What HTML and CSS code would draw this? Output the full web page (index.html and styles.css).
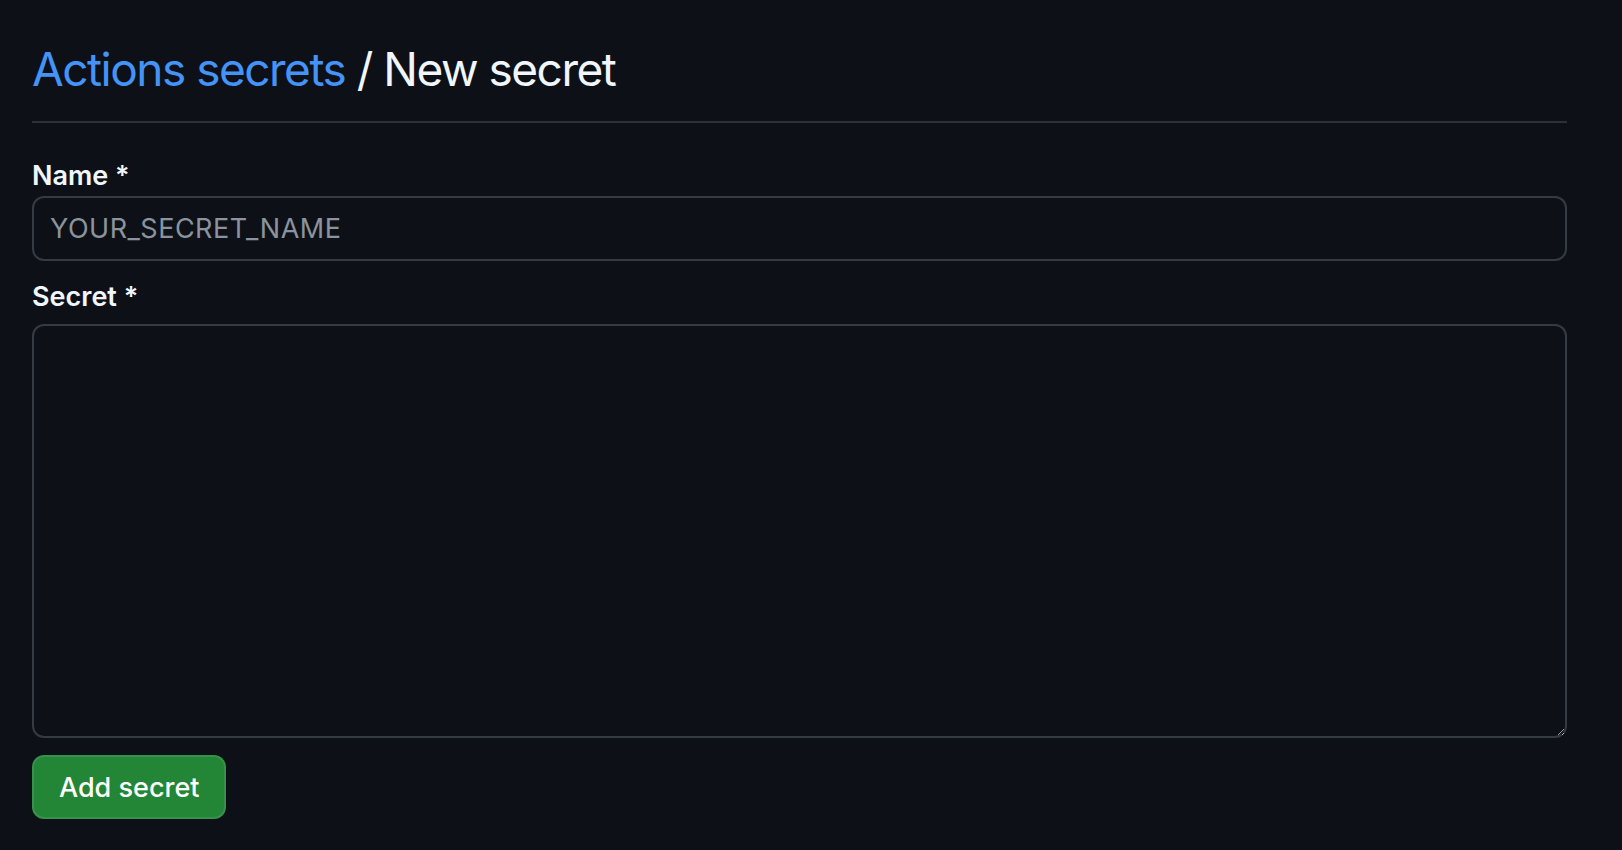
FILE: index.html
```html
<!DOCTYPE html>
<html lang="en">
<head>
    <meta charset="UTF-8">
    <title>New secret</title>
    <link rel="stylesheet" href="styles.css">
</head>
<body>
    <div class="container">
        <div class="subhead">
            <h2 class="subhead-heading"><a href="#">Actions secrets</a> / New secret</h2>
        </div>

        <form class="secret-form" onsubmit="return false">
            <label class="form-label" for="secret-name">Name *</label>
            <input type="text" id="secret-name" class="form-control" placeholder="YOUR_SECRET_NAME">

            <label class="form-label label-secret" for="secret-value">Secret *</label>
            <textarea id="secret-value" class="form-control secret-value"></textarea>

            <button type="submit" class="btn-primary">Add secret</button>
        </form>
    </div>
</body>
</html>
```

FILE: styles.css
```css
html {
    color-scheme: dark;
}
body {
    font-family: 'Inter', 'Liberation Sans', sans-serif;
    margin: 0;
    padding: 0;
    background: #0d1117;
    color: #f0f6fc;
}
.container {
    width: 1535px;
    padding: 35px 0 0 32px;
}
.subhead {
    padding-bottom: 17px;
    border-bottom: 2px solid #2c3139;
}
.subhead-heading {
    margin: 0;
    font-size: 46px;
    font-weight: 400;
    line-height: 69px;
    letter-spacing: -1.5px;
    color: #f0f6fc;
}
.subhead-heading a {
    color: #4493f8;
    text-decoration: none;
}
.secret-form {
    display: flex;
    flex-direction: column;
    align-items: flex-start;
    padding-top: 36px;
}
.form-label {
    display: block;
    font-size: 27px;
    font-weight: 600;
    line-height: 34px;
    margin-bottom: 3px;
}
.label-secret {
    margin-top: 19px;
    margin-bottom: 10px;
}
.form-control {
    box-sizing: border-box;
    width: 100%;
    height: 65px;
    padding: 0 16px;
    font-family: inherit;
    font-size: 27px;
    color: #f0f6fc;
    background: #0d1117;
    border: 2px solid #353b44;
    border-radius: 12px;
    outline: none;
}
.form-control::placeholder {
    color: #8b949e;
    letter-spacing: 0.5px;
}
.secret-value {
    height: 414px;
    padding: 14px 16px;
    resize: vertical;
}
.btn-primary {
    margin-top: 17px;
    height: 64px;
    padding: 0 25px;
    font-family: inherit;
    font-size: 27px;
    font-weight: 500;
    color: #ffffff;
    background: #238636;
    border: 2px solid rgba(240, 246, 252, 0.1);
    border-radius: 12px;
    cursor: pointer;
}
```
